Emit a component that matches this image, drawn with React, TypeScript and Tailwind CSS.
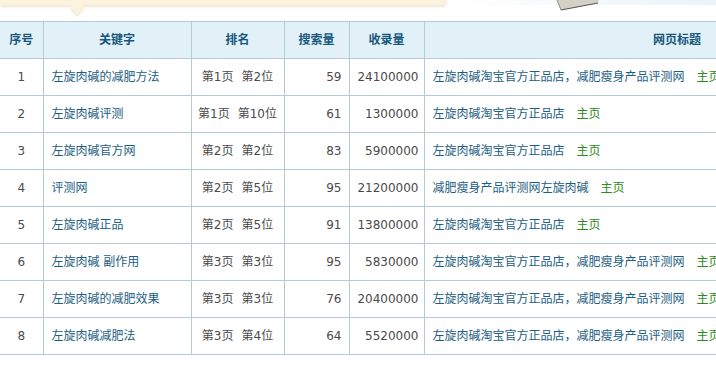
const rows = [
  { id: 1, kw: "左旋肉碱的减肥方法", page: 1, pos: 2, search: 59, indexed: 24100000, title: "左旋肉碱淘宝官方正品店，减肥瘦身产品评测网" },
  { id: 2, kw: "左旋肉碱评测", page: 1, pos: 10, search: 61, indexed: 1300000, title: "左旋肉碱淘宝官方正品店" },
  { id: 3, kw: "左旋肉碱官方网", page: 2, pos: 2, search: 83, indexed: 5900000, title: "左旋肉碱淘宝官方正品店" },
  { id: 4, kw: "评测网", page: 2, pos: 5, search: 95, indexed: 21200000, title: "减肥瘦身产品评测网左旋肉碱" },
  { id: 5, kw: "左旋肉碱正品", page: 2, pos: 5, search: 91, indexed: 13800000, title: "左旋肉碱淘宝官方正品店" },
  { id: 6, kw: "左旋肉碱 副作用", page: 3, pos: 3, search: 95, indexed: 5830000, title: "左旋肉碱淘宝官方正品店，减肥瘦身产品评测网" },
  { id: 7, kw: "左旋肉碱的减肥效果", page: 3, pos: 3, search: 76, indexed: 20400000, title: "左旋肉碱淘宝官方正品店，减肥瘦身产品评测网" },
  { id: 8, kw: "左旋肉碱减肥法", page: 3, pos: 4, search: 64, indexed: 5520000, title: "左旋肉碱淘宝官方正品店，减肥瘦身产品评测网" },
];

const cell = "border border-[#b3cbd3] h-[37px] p-0";

export default function App() {
  return (
    <div
      className="w-[716px] h-[372px] overflow-hidden bg-white text-[12px] leading-none"
      style={{ fontFamily: '"DejaVu Sans", "Noto Sans CJK SC", sans-serif' }}
    >
      {/* top decoration strip */}
      <div className="relative h-[21px]">
        <div className="absolute left-0 top-0 h-[5px] w-[447px] rounded-br-[6px] bg-[#fcf3df] shadow-[0_2px_3px_rgba(220,200,160,0.45)]" />
        <div className="absolute left-[72px] top-[2px] h-[10px] w-[10px] rotate-45 bg-[#fcf3df] shadow-[2px_2px_2px_rgba(220,200,160,0.35)]" />
        <div className="absolute left-[448px] top-0 h-[5px] w-[268px] bg-gradient-to-r from-white to-[#eaf3f9]" />
        <svg className="absolute left-[555px] top-0" width="48" height="12" viewBox="0 0 48 12">
          <polygon points="2,0 44,0 43,3 6,10" fill="#d3d0c8" />
          <polyline points="6,10 43,3" stroke="#5a5650" strokeWidth="1.2" fill="none" />
          <line x1="2" y1="0" x2="6" y2="10" stroke="#8f8b84" strokeWidth="1" />
        </svg>
      </div>

      <table className="border-collapse table-fixed w-[930px]">
        <colgroup>
          <col className="w-[43px]" />
          <col className="w-[148px]" />
          <col className="w-[93px]" />
          <col className="w-[65px]" />
          <col className="w-[75px]" />
          <col className="w-[506px]" />
        </colgroup>
        <thead>
          <tr className="bg-[#e2f0f8] text-[#17577c] font-bold">
            <th className={`${cell} border-l-0 text-center`}>序号</th>
            <th className={`${cell} text-center`}>关键字</th>
            <th className={`${cell} text-center`}>排名</th>
            <th className={`${cell} text-center`}>搜索量</th>
            <th className={`${cell} text-center`}>收录量</th>
            <th className={`${cell} text-center`}>网页标题</th>
          </tr>
        </thead>
        <tbody>
          {rows.map((r) => (
            <tr key={r.id}>
              <td className={`${cell} border-l-0 text-center text-[#4a4a4a]`}>{r.id}</td>
              <td className={`${cell} pl-[8px] text-[#1d5e82]`}>{r.kw}</td>
              <td className={`${cell} text-center text-[#4a4a4a]`}>
                第{r.page}页<span className="ml-[8px]">第{r.pos}位</span>
              </td>
              <td className={`${cell} pr-[7px] text-right text-[#4a4a4a]`}>{r.search}</td>
              <td className={`${cell} pr-[5px] text-right text-[#4a4a4a]`}>{r.indexed}</td>
              <td className={`${cell} pl-[8px] whitespace-nowrap`}>
                <span className="text-[#1d5e82]">{r.title}</span>
                <span className="ml-[12px] text-[#2e8a1c]">主页</span>
              </td>
            </tr>
          ))}
        </tbody>
      </table>
    </div>
  );
}
